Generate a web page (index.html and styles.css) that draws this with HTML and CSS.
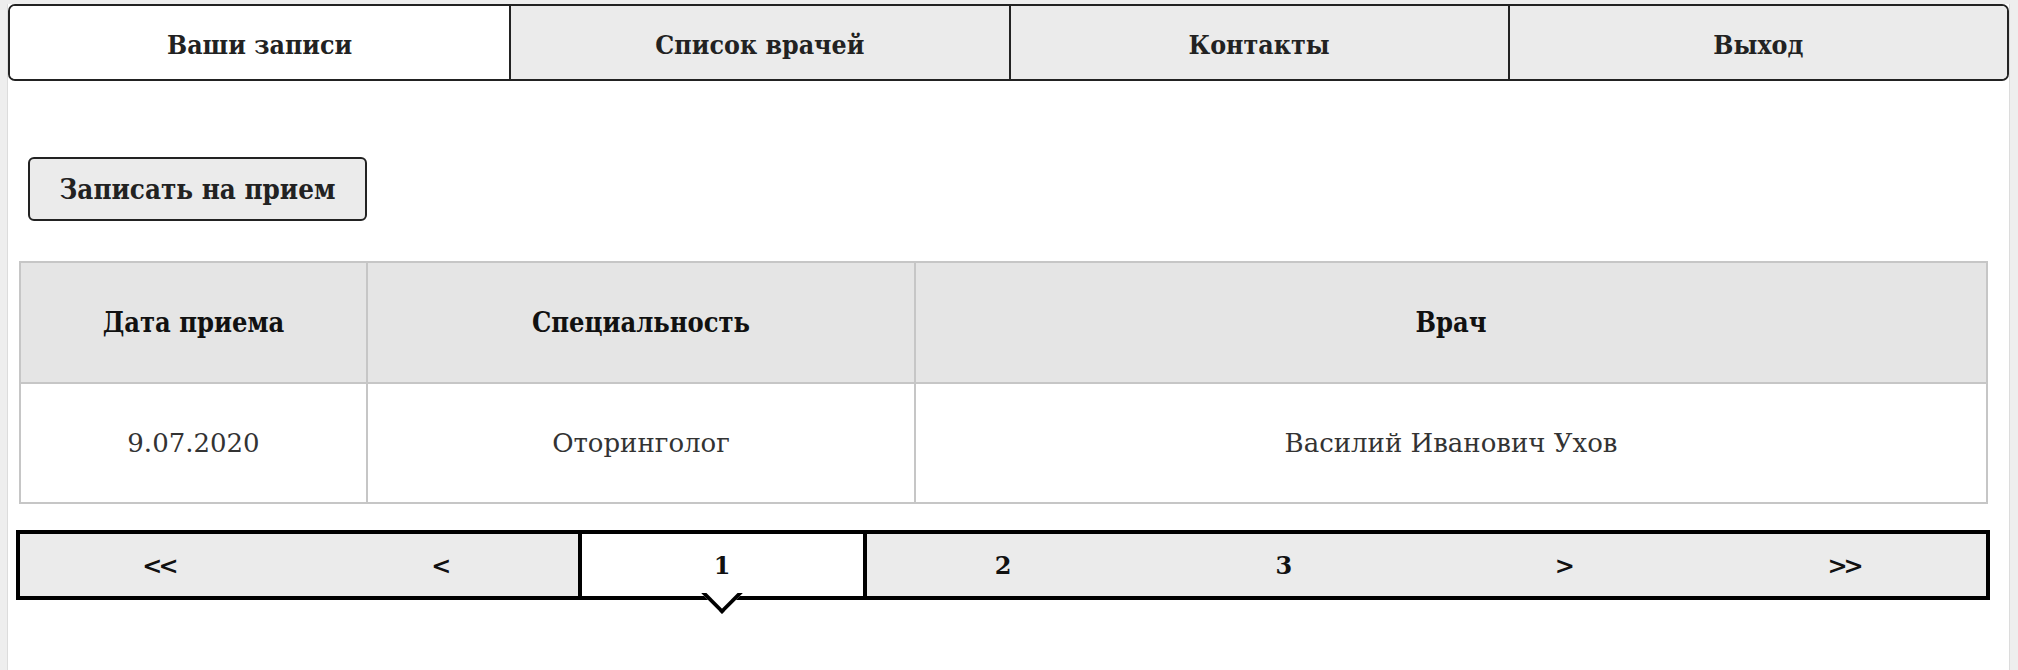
FILE: index.html
```html
<!DOCTYPE html>
<html lang="ru">
<head>
<meta charset="utf-8">
<title>Ваши записи</title>
<link rel="stylesheet" href="styles.css">
</head>
<body>
<div class="page">
  <nav class="tabs">
    <a class="tab tab-active">Ваши записи</a>
    <a class="tab">Список врачей</a>
    <a class="tab">Контакты</a>
    <a class="tab">Выход</a>
  </nav>
  <main class="content">
    <button class="btn">Записать на прием</button>
    <table class="records">
      <colgroup>
        <col class="c1"><col class="c2"><col class="c3">
      </colgroup>
      <thead>
        <tr><th>Дата приема</th><th>Специальность</th><th>Врач</th></tr>
      </thead>
      <tbody>
        <tr><td>9.07.2020</td><td>Оторинголог</td><td>Василий Иванович Ухов</td></tr>
      </tbody>
    </table>
    <div class="pager">
      <span class="pg pg-dbl">&lt;&lt;</span>
      <span class="pg">&lt;</span>
      <span class="pg pg-active">1<i class="notch"></i></span>
      <span class="pg">2</span>
      <span class="pg">3</span>
      <span class="pg">&gt;</span>
      <span class="pg pg-dbl">&gt;&gt;</span>
    </div>
  </main>
</div>
</body>
</html>
```
FILE: styles.css
```css
html, body {
  margin: 0;
  padding: 0;
}
body {
  background: #eeeeee;
  padding-top: 4px;
  font-family: "DejaVu Serif", "Liberation Serif", serif;
  color: #222;
}
.page {
  margin: 0 8px 0 7px;
  border-left: 1px solid #dcdcdc;
  border-right: 1px solid #dcdcdc;
  background: #fff;
  height: 666px;
  box-sizing: border-box;
}
.tabs {
  display: grid;
  grid-template-columns: repeat(4, 1fr);
  height: 77px;
  box-sizing: border-box;
  border: 2px solid #222;
  border-radius: 7px;
  overflow: hidden;
}
.tab {
  display: flex;
  align-items: center;
  justify-content: center;
  padding-top: 4px;
  background: #ebebeb;
  border-left: 2px solid #222;
  font-family: "DejaVu Serif Condensed", "DejaVu Serif", serif;
  font-stretch: condensed;
  font-weight: bold;
  font-size: 26.5px;
  color: #222;
}
.tab:first-child {
  border-left: 0;
}
.tab-active {
  background: #fff;
}
.content {
  padding: 76px 19px 0 8px;
}
.btn {
  display: block;
  margin-left: 12px;
  width: 339px;
  height: 64px;
  box-sizing: border-box;
  border: 2px solid #222;
  border-radius: 6px;
  background: #ebebeb;
  font-family: "DejaVu Serif Condensed", "DejaVu Serif", serif;
  font-stretch: condensed;
  font-weight: bold;
  font-size: 27.5px;
  color: #222;
  padding: 0;
}
.records {
  margin: 40px 2px 0 3px;
  width: calc(100% - 5px);
  border-collapse: collapse;
  table-layout: fixed;
  border: 2px solid #c6c6c6;
}
.c1 { width: 347px; }
.c2 { width: 548px; }
.records th, .records td {
  border: 2px solid #c6c6c6;
  text-align: center;
  padding: 0;
}
.records th {
  background: #e5e5e5;
  height: 119px;
  font-family: "DejaVu Serif Condensed", "DejaVu Serif", serif;
  font-stretch: condensed;
  font-weight: bold;
  font-size: 27px;
  color: #111;
}
.records td {
  height: 118px;
  font-weight: normal;
  font-size: 26px;
  color: #333;
}
.pager {
  margin-top: 26px;
  display: grid;
  grid-template-columns: repeat(7, 1fr);
  height: 70px;
  box-sizing: border-box;
  border: 4px solid #000;
  background: #ebebeb;
}
.pg {
  display: flex;
  align-items: center;
  justify-content: center;
  font-weight: bold;
  font-size: 24px;
  color: #111;
}
.pg-dbl {
  letter-spacing: -4px;
  padding-right: 4px;
}
.pg-active {
  position: relative;
  z-index: 1;
  background: #fff;
  box-shadow: -4px 0 0 #000, 4px 0 0 #000;
}
.notch {
  position: absolute;
  left: calc(50% - 15px);
  top: 44px;
  width: 30px;
  height: 30px;
  box-sizing: border-box;
  background: #fff;
  border-right: 4px solid #000;
  border-bottom: 4px solid #000;
  transform: rotate(45deg);
  clip-path: polygon(100% 0, 100% 100%, 0 100%);
}
```
